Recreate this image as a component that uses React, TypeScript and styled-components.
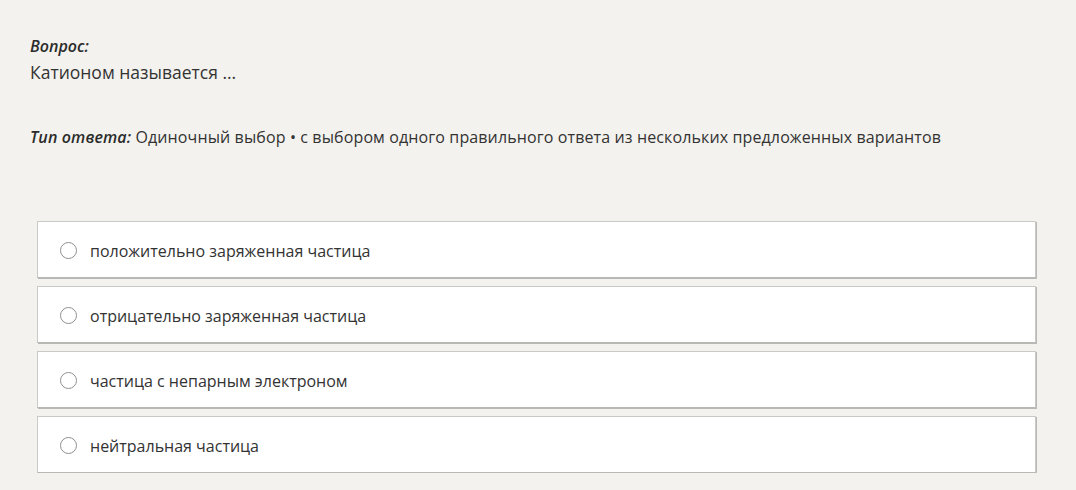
import React from 'react';
import styled, { createGlobalStyle } from 'styled-components';

const GlobalStyle = createGlobalStyle`
  html, body {
    margin: 0;
    padding: 0;
    background: #f3f2ee;
  }
  body {
    font-family: "Open Sans", "Noto Sans", sans-serif;
    color: #333;
  }
`;

const Page = styled.div`
  padding: 35px 40px 0 30px;
`;

const Label = styled.div`
  font-style: italic;
  font-weight: 600;
  font-size: 16px;
  line-height: 22px;
  color: #2b2b2b;
`;

const QuestionText = styled.div`
  font-size: 17.5px;
  line-height: 26px;
  color: #333;
  margin-top: 2px;
`;

const TypeLine = styled.div`
  margin-top: 41px;
  font-size: 16px;
  line-height: 22px;
  color: #333;
  letter-spacing: 0.12px;
`;

const TypeLabel = styled.span`
  font-style: italic;
  font-weight: 600;
  color: #2b2b2b;
`;

const Options = styled.div`
  margin: 73px 0 0 7px;
  display: flex;
  flex-direction: column;
  gap: 8px;
`;

const Option = styled.label`
  display: flex;
  align-items: center;
  gap: 13px;
  box-sizing: border-box;
  height: 57px;
  padding: 2px 0 0 22px;
  background: #fff;
  border: 1px solid #c9c9c6;
  border-bottom-color: #b8b8b4;
  box-shadow: 1px 1px 0 #b8b8b4;
  font-size: 16px;
  color: #333;
  cursor: pointer;
`;

const Radio = styled.span`
  width: 15px;
  height: 15px;
  border: 1px solid #8f8f8f;
  border-radius: 50%;
  background: #fff;
  flex-shrink: 0;
`;

const OptionText = styled.span`
  line-height: 22px;
`;

const answers = [
  'положительно заряженная частица',
  'отрицательно заряженная частица',
  'частица с непарным электроном',
  'нейтральная частица',
];

const App = () => {
  return (
    <>
      <GlobalStyle />
      <Page>
        <Label>Вопрос:</Label>
        <QuestionText>Катионом называется ...</QuestionText>
        <TypeLine>
          <TypeLabel>Тип ответа:</TypeLabel> Одиночный выбор • с выбором одного правильного ответа из нескольких предложенных вариантов
        </TypeLine>
        <Options>
          {answers.map((a) => (
            <Option key={a}>
              <Radio />
              <OptionText>{a}</OptionText>
            </Option>
          ))}
        </Options>
      </Page>
    </>
  );
};

export default App;
